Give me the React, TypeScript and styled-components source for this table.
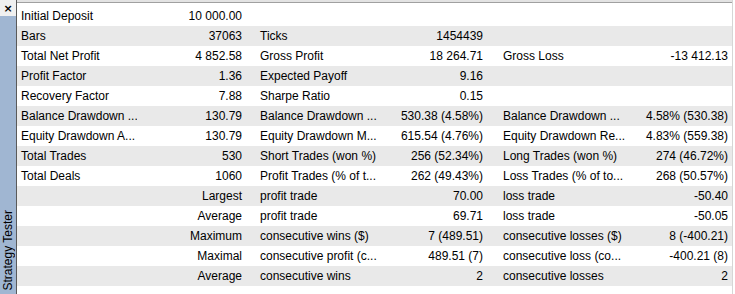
import styled, { createGlobalStyle } from "styled-components";

const GlobalStyle = createGlobalStyle`
  html, body {
    margin: 0;
    padding: 0;
    background: #ffffff;
  }
  body {
    font-family: "Liberation Sans", Arial, sans-serif;
    font-size: 12px;
    color: #000;
  }
`;

const Window = styled.div`
  display: flex;
  width: 735px;
  height: 294px;
  overflow: hidden;
  background: #fff;
`;

const SideBar = styled.div`
  width: 16px;
  display: flex;
  flex-direction: column;
  border-right: 1px solid #5a5a5a;
`;

const CloseBox = styled.div`
  height: 16px;
  background: #f0f0f0;
  display: flex;
  align-items: center;
  justify-content: center;
  font-family: "DejaVu Sans", sans-serif;
  font-weight: bold;
  font-size: 11px;
  line-height: 1;
`;

const SideTab = styled.div`
  flex: 1;
  background: #a0b6d2;
  display: flex;
  align-items: flex-end;
  justify-content: center;
  padding-bottom: 4px;
`;

const SideLabel = styled.span`
  writing-mode: vertical-rl;
  transform: rotate(180deg);
  font-size: 12px;
  line-height: 14px;
  color: #000;
  white-space: nowrap;
`;

const Main = styled.div`
  flex: 1;
  display: flex;
  flex-direction: column;
  border-right: 1px solid #d6d6d6;
  margin-right: 2px;
`;

const TopRule = styled.div`
  height: 2px;
  background: #e3e3e3;
  border-bottom: 1px solid #a0a0a0;
  margin-bottom: 3px;
`;

const Table = styled.div`
  display: flex;
  flex-direction: column;
`;

const Row = styled.div<{ $alt: boolean }>`
  display: grid;
  grid-template-columns: 120px 119px 136px 105px 138px 1fr;
  height: 20px;
  align-items: center;
  background: ${(p) => (p.$alt ? "#e9e9e9" : "#ffffff")};
`;

const Label = styled.div<{ $pad: number }>`
  padding-left: ${(p) => p.$pad}px;
  white-space: nowrap;
  overflow: hidden;
`;

const Value = styled.div<{ $pad: number }>`
  padding-right: ${(p) => p.$pad}px;
  text-align: right;
  white-space: nowrap;
  overflow: hidden;
`;

type Line = [string, string, string, string, string, string];

const lines: Line[] = [
  ["Initial Deposit", "10 000.00", "", "", "", ""],
  ["Bars", "37063", "Ticks", "1454439", "", ""],
  ["Total Net Profit", "4 852.58", "Gross Profit", "18 264.71", "Gross Loss", "-13 412.13"],
  ["Profit Factor", "1.36", "Expected Payoff", "9.16", "", ""],
  ["Recovery Factor", "7.88", "Sharpe Ratio", "0.15", "", ""],
  ["Balance Drawdown ...", "130.79", "Balance Drawdown ...", "530.38 (4.58%)", "Balance Drawdown ...", "4.58% (530.38)"],
  ["Equity Drawdown A...", "130.79", "Equity Drawdown M...", "615.54 (4.76%)", "Equity Drawdown Re...", "4.83% (559.38)"],
  ["Total Trades", "530", "Short Trades (won %)", "256 (52.34%)", "Long Trades (won %)", "274 (46.72%)"],
  ["Total Deals", "1060", "Profit Trades (% of t...", "262 (49.43%)", "Loss Trades (% of to...", "268 (50.57%)"],
  ["", "Largest", "profit trade", "70.00", "loss trade", "-50.40"],
  ["", "Average", "profit trade", "69.71", "loss trade", "-50.05"],
  ["", "Maximum", "consecutive wins ($)", "7 (489.51)", "consecutive losses ($)", "8 (-400.21)"],
  ["", "Maximal", "consecutive profit (c...", "489.51 (7)", "consecutive loss (co...", "-400.21 (8)"],
  ["", "Average", "consecutive wins", "2", "consecutive losses", "2"],
];

export default function App() {
  return (
    <>
      <GlobalStyle />
      <Window>
        <SideBar>
          <CloseBox>×</CloseBox>
          <SideTab>
            <SideLabel>Strategy Tester</SideLabel>
          </SideTab>
        </SideBar>
        <Main>
          <TopRule />
          <Table>
            {lines.map((l, i) => (
              <Row key={i} $alt={i % 2 === 1}>
                <Label $pad={4}>{l[0]}</Label>
                <Value $pad={14}>{l[1]}</Value>
                <Label $pad={4}>{l[2]}</Label>
                <Value $pad={14}>{l[3]}</Value>
                <Label $pad={6}>{l[4]}</Label>
                <Value $pad={4}>{l[5]}</Value>
              </Row>
            ))}
          </Table>
        </Main>
      </Window>
    </>
  );
}
